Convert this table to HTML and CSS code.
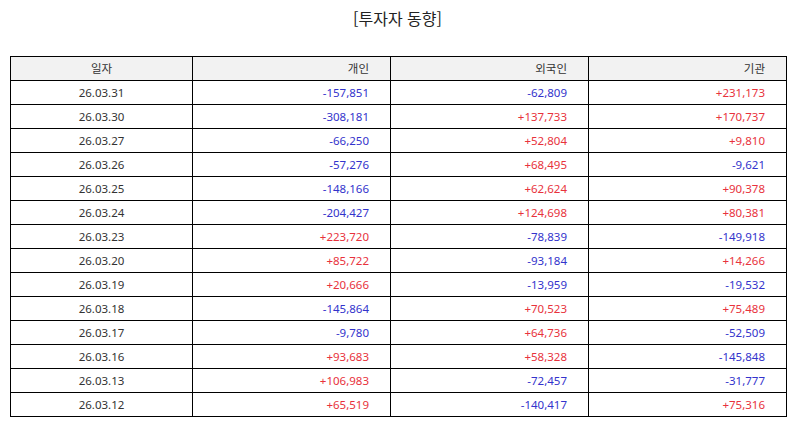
FILE: index.html
```html
<!DOCTYPE html>
<html lang="ko">
<head>
<meta charset="utf-8">
<title>투자자 동향</title>
<link rel="stylesheet" href="styles.css">
</head>
<body>
<div class="page">
  <h1 class="title">[투자자 동향]</h1>
  <table class="grid">
    <colgroup>
      <col class="c-date">
      <col class="c-num">
      <col class="c-num">
      <col class="c-num">
    </colgroup>
    <thead>
      <tr><th class="center">일자</th><th>개인</th><th>외국인</th><th>기관</th></tr>
    </thead>
    <tbody>
      <tr><td class="center">26.03.31</td><td class="dn">-157,851</td><td class="dn">-62,809</td><td class="up">+231,173</td></tr>
      <tr><td class="center">26.03.30</td><td class="dn">-308,181</td><td class="up">+137,733</td><td class="up">+170,737</td></tr>
      <tr><td class="center">26.03.27</td><td class="dn">-66,250</td><td class="up">+52,804</td><td class="up">+9,810</td></tr>
      <tr><td class="center">26.03.26</td><td class="dn">-57,276</td><td class="up">+68,495</td><td class="dn">-9,621</td></tr>
      <tr><td class="center">26.03.25</td><td class="dn">-148,166</td><td class="up">+62,624</td><td class="up">+90,378</td></tr>
      <tr><td class="center">26.03.24</td><td class="dn">-204,427</td><td class="up">+124,698</td><td class="up">+80,381</td></tr>
      <tr><td class="center">26.03.23</td><td class="up">+223,720</td><td class="dn">-78,839</td><td class="dn">-149,918</td></tr>
      <tr><td class="center">26.03.20</td><td class="up">+85,722</td><td class="dn">-93,184</td><td class="up">+14,266</td></tr>
      <tr><td class="center">26.03.19</td><td class="up">+20,666</td><td class="dn">-13,959</td><td class="dn">-19,532</td></tr>
      <tr><td class="center">26.03.18</td><td class="dn">-145,864</td><td class="up">+70,523</td><td class="up">+75,489</td></tr>
      <tr><td class="center">26.03.17</td><td class="dn">-9,780</td><td class="up">+64,736</td><td class="dn">-52,509</td></tr>
      <tr><td class="center">26.03.16</td><td class="up">+93,683</td><td class="up">+58,328</td><td class="dn">-145,848</td></tr>
      <tr><td class="center">26.03.13</td><td class="up">+106,983</td><td class="dn">-72,457</td><td class="dn">-31,777</td></tr>
      <tr><td class="center">26.03.12</td><td class="up">+65,519</td><td class="dn">-140,417</td><td class="up">+75,316</td></tr>
    </tbody>
  </table>
</div>
</body>
</html>
```
FILE: styles.css
```css
html, body {
  margin: 0;
  padding: 0;
  background: #ffffff;
}

body {
  font-family: "Noto Sans", "Noto Sans CJK KR", sans-serif;
  color: #333333;
}

.page {
  padding: 0 10px;
}

.title {
  margin: 0;
  padding-top: 6px;
  height: 56px;
  box-sizing: border-box;
  font-family: "Noto Sans CJK KR", sans-serif;
  font-size: 16px;
  font-weight: 400;
  line-height: 24px;
  text-align: center;
  color: #222222;
}

.grid {
  border-collapse: collapse;
  width: 776px;
  table-layout: fixed;
  font-size: 11.5px;
}

.c-date { width: 182px; }
.c-num { width: 198px; }

.grid th,
.grid td {
  border: 1px solid #000000;
  height: 23px;
  padding: 0 21px 0 0;
  text-align: right;
  font-weight: 400;
  line-height: 16px;
  vertical-align: middle;
}

.grid th {
  background: #f2f2f2;
  color: #333333;
}

.grid .center {
  text-align: center;
  padding: 0;
}

.dn { color: #3333cc; }
.up { color: #e8323c; }
```
